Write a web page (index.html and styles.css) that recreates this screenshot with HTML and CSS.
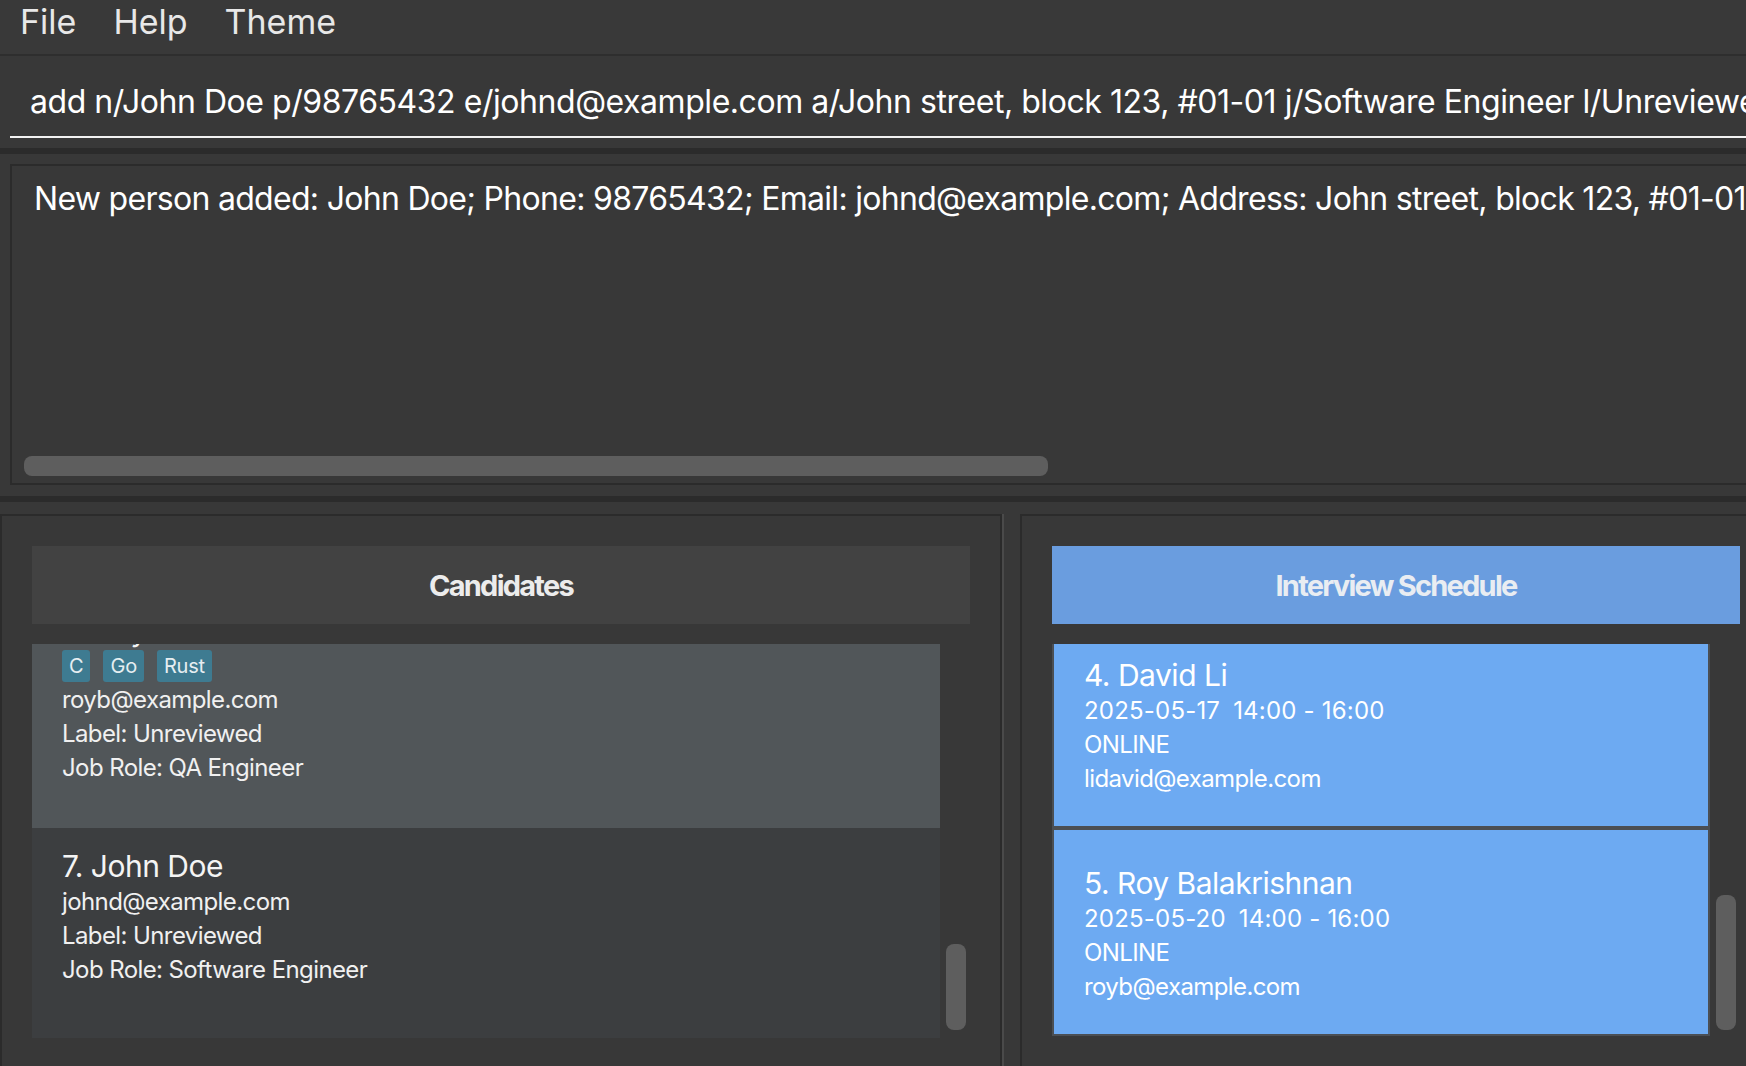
FILE: index.html
```html
<!DOCTYPE html>
<html lang="en">
<head>
<meta charset="utf-8">
<title>HR Tracker</title>
<link rel="stylesheet" href="styles.css">
</head>
<body>
<div class="app">
  <nav class="menubar">
    <span class="menu-item">File</span>
    <span class="menu-item">Help</span>
    <span class="menu-item">Theme</span>
  </nav>

  <div class="command-pane">
    <div class="command-field">add n/John Doe p/98765432 e/johnd@example.com a/John street, block 123, #01-01 j/Software Engineer l/Unreviewed</div>
  </div>

  <div class="divider"></div>

  <div class="result-pane">
    <div class="result-box">
      <div class="result-text">New person added: John Doe; Phone: 98765432; Email: johnd@example.com; Address: John street, block 123, #01-01; Job Role: Software Engineer; Label: Unreviewed</div>
      <div class="hscroll"><div class="hthumb" style="width:1024px"></div></div>
    </div>
  </div>

  <div class="divider"></div>

  <div class="lists-pane">
    <section class="panel panel-left">
      <header class="panel-title title-dark">Candidates</header>
      <div class="list-area">
        <div class="list-viewport">
          <div class="list-inner" style="margin-top:-52px">
            <article class="card card-odd">
              <div class="card-name">6. Roy Balakrishnan</div>
              <div class="tags">
                <span class="tag">C</span>
                <span class="tag">Go</span>
                <span class="tag">Rust</span>
              </div>
              <div class="card-line">royb@example.com</div>
              <div class="card-line">Label: Unreviewed</div>
              <div class="card-line">Job Role: QA Engineer</div>
            </article>
            <article class="card card-even">
              <div class="card-name">7. John Doe</div>
              <div class="card-line">johnd@example.com</div>
              <div class="card-line">Label: Unreviewed</div>
              <div class="card-line">Job Role: Software Engineer</div>
            </article>
          </div>
        </div>
        <div class="vscroll"><div class="vthumb" style="margin-top:300px;height:86px"></div></div>
      </div>
    </section>

    <div class="splitter"></div>

    <section class="panel panel-right">
      <header class="panel-title title-blue">Interview Schedule</header>
      <div class="list-area">
        <div class="list-viewport">
          <div class="list-inner" style="margin-top:-24px">
            <article class="icard">
              <div class="card-name">4. David Li</div>
              <div class="card-line date-line"><span>2025-05-17</span><span class="time">14:00 - 16:00</span></div>
              <div class="card-line">ONLINE</div>
              <div class="card-line">lidavid@example.com</div>
            </article>
            <article class="icard">
              <div class="card-name">5. Roy Balakrishnan</div>
              <div class="card-line date-line"><span>2025-05-20</span><span class="time">14:00 - 16:00</span></div>
              <div class="card-line">ONLINE</div>
              <div class="card-line">royb@example.com</div>
            </article>
          </div>
        </div>
        <div class="vscroll"><div class="vthumb" style="margin-top:251px;height:135px"></div></div>
      </div>
    </section>
  </div>
</div>
</body>
</html>
```

FILE: styles.css
```css
* { box-sizing: border-box; }

html, body {
  margin: 0;
  padding: 0;
  background: #383838;
  overflow: hidden;
  width: 1746px;
  height: 1066px;
}

body {
  font-family: Inter, "Noto Sans", sans-serif;
  color: #ffffff;
}

.app {
  width: 1772px;
  display: flex;
  flex-direction: column;
}

/* menu bar */
.menubar {
  height: 56px;
  background: #393939;
  border-bottom: 2px solid #2e2e2e;
  display: flex;
  gap: 37px;
  padding: 2px 0 0 20px;
  font-size: 34px;
  line-height: 40px;
  color: #e8e8e8;
}

/* command box */
.command-pane {
  background: #383838;
  padding: 0 0 10px 10px;
  height: 92px;
}
.command-field {
  height: 82px;
  border-bottom: 2px solid #f2f2f2;
  padding: 26px 0 0 20px;
  font-size: 32px;
  line-height: 40px;
  white-space: nowrap;
  overflow: hidden;
  letter-spacing: -0.45px;
}

.divider {
  height: 6px;
  background: #2b2b2b;
}

/* result display */
.result-pane {
  height: 342px;
  padding: 10px 0 11px 10px;
}
.result-box {
  height: 100%;
  border: 2px solid #2b2b2b;
  border-right: none;
  display: flex;
  flex-direction: column;
}
.result-text {
  flex: 1;
  padding: 13px 0 0 22px;
  font-size: 32px;
  line-height: 40px;
  white-space: nowrap;
  overflow: hidden;
  letter-spacing: -0.7px;
}
.hscroll {
  height: 20px;
  margin: 0 0 7px 12px;
}
.hthumb {
  height: 20px;
  background: #5e5e5e;
  border-radius: 8px;
}

/* lower panes */
.lists-pane {
  display: flex;
  padding-top: 12px;
  height: 564px;
}
.panel {
  border: 2px solid #2b2b2b;
  border-bottom: none;
  padding: 30px 30px 0 30px;
  display: flex;
  flex-direction: column;
}
.panel-left { width: 1002px; }
.panel-right { width: 752px; }

.splitter {
  width: 18px;
  border-left: 2px solid #4a4a4a;
}

.panel-title {
  height: 78px;
  display: flex;
  align-items: center;
  justify-content: center;
  font-size: 29px;
  font-weight: 700;
  letter-spacing: -1.75px;
  color: #ececec;
}
.title-dark { background: #424242; }
.title-blue { background: #6a9ddf; color: #e9edf2; }

.list-area {
  margin-top: 20px;
  height: 394px;
  display: flex;
}
.list-viewport {
  flex: 1;
  overflow: hidden;
}
.vscroll {
  width: 30px;
  padding: 0 4px 0 6px;
}
.vthumb {
  width: 20px;
  background: #5e5e5e;
  border-radius: 8px;
}

/* candidate cards */
.card {
  padding: 19px 30px 43px 30px;
  min-height: 236px;
}
.card-odd { background: #515659; }
.card-even { background: #3c3e40; }

.card-name {
  font-size: 30px;
  line-height: 38px;
  letter-spacing: -0.5px;
  color: #f4f4f4;
}
.card-line {
  font-size: 24px;
  line-height: 34px;
  letter-spacing: -0.6px;
  color: #f0f0f0;
  white-space: nowrap;
}

.tags {
  display: flex;
  gap: 13px;
  padding-top: 1px;
  height: 34px;
}
.tag {
  height: 32px;
  line-height: 32px;
  padding: 0 7px;
  background: #3e7b91;
  border-radius: 3px;
  font-size: 20px;
  letter-spacing: -0.2px;
  color: #e6eef1;
}

/* interview cards */
.icard {
  background: #6daaf2;
  border: 2px solid #4b4f54;
  padding: 34px 30px 28px 30px;
  height: 208px;
}
.icard .card-name { color: #ffffff; }
.icard .card-line { line-height: 34px; color: #ffffff; }
.icard .date-line { letter-spacing: 0.2px; }
.time { margin-left: 13px; }
```
